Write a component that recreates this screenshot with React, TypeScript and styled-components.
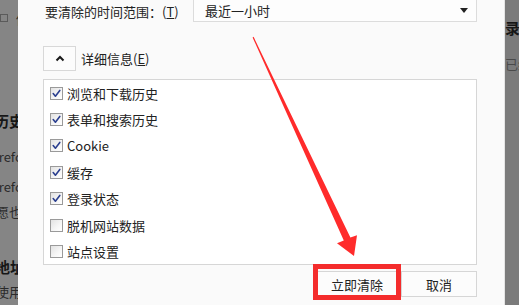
import { FC } from "react";
import styled, { createGlobalStyle } from "styled-components";

const GlobalStyle = createGlobalStyle`
    html, body {
        margin: 0;
        padding: 0;
        overflow: hidden;
        background: #7d7d7d;
    }
    body {
        font-family: "Noto Sans CJK SC", "Noto Sans", sans-serif;
        color: #222;
    }
`;

type Item = { label: string; checked: boolean };

const items: Item[] = [
    { label: "浏览和下载历史", checked: true },
    { label: "表单和搜索历史", checked: true },
    { label: "Cookie", checked: true },
    { label: "缓存", checked: true },
    { label: "登录状态", checked: true },
    { label: "脱机网站数据", checked: false },
    { label: "站点设置", checked: false }
];

const CheckBox: FC<{ checked: boolean }> = ({ checked }) => (
    <Box>
        {checked && (
            <svg width="11" height="11" viewBox="0 0 11 11">
                <path d="M2.2 5.6 L4.4 8.2 L8.8 2.4" fill="none" stroke="#2b3f8f" strokeWidth="1.6" strokeLinecap="round" strokeLinejoin="round" />
            </svg>
        )}
    </Box>
);

const App: FC = () => {
    return (
        <Page>
            <GlobalStyle />
            <LeftStrip>
                <StripLine $top={10} $shift={0}>
                    <TinyBox />
                    <span style={{ marginLeft: 8 }}>使</span>
                </StripLine>
                <StripLine $top={86} $shift={-6} $bold>历史记录</StripLine>
                <StripLine $top={20} $shift={-12}>Firefox 会</StripLine>
                <StripLine $top={14} $shift={-12}>Firefox 将</StripLine>
                <StripLine $top={9} $shift={-17}>意愿也</StripLine>
                <StripLine $top={39} $shift={-5} $bold>地址栏</StripLine>
                <StripLine $top={9} $shift={-4}>使用</StripLine>
            </LeftStrip>

            <Dialog>
                <TimeRow>
                    <TimeLabel>要清除的时间范围：(<u>T</u>)</TimeLabel>
                    <Select>
                        <span>最近一小时</span>
                        <svg width="8" height="5" viewBox="0 0 8 5">
                            <path d="M0 0 H8 L4 5 Z" fill="#222" />
                        </svg>
                    </Select>
                </TimeRow>

                <ExpandRow>
                    <ExpandButton>
                        <svg width="10" height="7" viewBox="0 0 10 7">
                            <path d="M1.5 5.5 L5 2 L8.5 5.5" fill="none" stroke="#1a1a1a" strokeWidth="2" />
                        </svg>
                    </ExpandButton>
                    <span>详细信息(<u>E</u>)</span>
                </ExpandRow>

                <ListBox>
                    {items.map((item) => (
                        <ListRow key={item.label}>
                            <CheckBox checked={item.checked} />
                            <span>{item.label}</span>
                        </ListRow>
                    ))}
                </ListBox>

                <ButtonRow>
                    <DialogButton $width={80}>立即清除</DialogButton>
                    <DialogButton $width={76}>取消</DialogButton>
                </ButtonRow>
            </Dialog>

            <RightStrip>
                <StripLine $top={19} $shift={0} $bold>
                    录<span style={{ color: "#2d5d9c" }}>制</span>
                </StripLine>
                <StripLine $top={20} $shift={0} $muted>已经</StripLine>
            </RightStrip>

            <Highlight />
            <ArrowLayer width="519" height="305" viewBox="0 0 519 305">
                <polygon
                    points="252.6,37.4 253.6,36.8 350.4,237.4 357,235.2 354,256 337,243.2 343.8,240.6"
                    fill="#ff2b2b"
                />
            </ArrowLayer>
        </Page>
    );
};

export default App;

const Page = styled.div`
    position: relative;
    display: flex;
    width: 519px;
    height: 305px;
    overflow: hidden;
    background: #7d7d7d;
`;

const LeftStrip = styled.div`
    width: 18px;
    flex-shrink: 0;
    display: flex;
    flex-direction: column;
    overflow: hidden;
    background: #858585;
`;

const RightStrip = styled.div`
    flex: 1;
    display: flex;
    flex-direction: column;
    overflow: hidden;
    background: #7b7b7b;
`;

const StripLine = styled.div<{ $top: number; $shift: number; $bold?: boolean; $muted?: boolean }>`
    display: flex;
    align-items: center;
    height: 16px;
    margin-top: ${(p) => p.$top}px;
    margin-left: ${(p) => p.$shift}px;
    white-space: nowrap;
    font-size: ${(p) => (p.$bold ? 15 : 13)}px;
    font-weight: ${(p) => (p.$bold ? 700 : 400)};
    color: ${(p) => (p.$muted ? "#4a4a4a" : p.$bold ? "#161616" : "#2a2a2a")};
`;

const TinyBox = styled.span`
    display: inline-block;
    width: 6px;
    height: 6px;
    border: 1px solid #5a5a5a;
    flex-shrink: 0;
`;

const Dialog = styled.div`
    width: 487px;
    flex-shrink: 0;
    box-sizing: border-box;
    display: flex;
    flex-direction: column;
    padding: 0 27px 0 25px;
    background: #fafafa;
    border-right: 1px solid #e4e4e4;
    font-size: 13px;
`;

const TimeRow = styled.div`
    display: flex;
    align-items: center;
    height: 26px;
    margin-top: -4px;
`;

const TimeLabel = styled.div`
    width: 150px;
    padding-left: 2px;
    box-sizing: border-box;
    margin-top: 4px;
    white-space: nowrap;
`;

const Select = styled.div`
    flex: 1;
    height: 26px;
    box-sizing: border-box;
    display: flex;
    align-items: center;
    justify-content: space-between;
    padding: 0 8px 0 11px;
    background: #fdfdfd;
    border: 1px solid #dcdcdc;
    svg {
        margin-top: 2px;
    }
    span {
        margin-top: 3px;
    }
`;

const ExpandRow = styled.div`
    display: flex;
    align-items: center;
    gap: 5px;
    height: 25px;
    margin-top: 24px;
`;

const ExpandButton = styled.div`
    width: 33px;
    height: 25px;
    box-sizing: border-box;
    display: flex;
    align-items: center;
    justify-content: center;
    background: #fcfcfc;
    border: 1px solid #d8d8d8;
`;

const ListBox = styled.div`
    height: 186px;
    margin-top: 8px;
    box-sizing: border-box;
    padding: 0 0 0 6px;
    background: #ffffff;
    border: 1px solid #d6d6d6;
`;

const ListRow = styled.div`
    display: flex;
    align-items: center;
    gap: 4px;
    height: 26.4px;
`;

const Box = styled.span`
    width: 13px;
    height: 13px;
    box-sizing: border-box;
    display: flex;
    align-items: center;
    justify-content: center;
    border: 1px solid #9a9a9a;
    background: linear-gradient(135deg, #e2e2e2 0%, #f6f6f6 60%, #ffffff 100%);
`;

const ButtonRow = styled.div`
    display: flex;
    justify-content: flex-end;
    gap: 4px;
    margin-top: 6px;
`;

const DialogButton = styled.div<{ $width: number }>`
    width: ${(p) => p.$width}px;
    height: 26px;
    box-sizing: border-box;
    display: flex;
    align-items: center;
    justify-content: center;
    background: #fcfcfc;
    border: 1px solid #d6d6d6;
`;

const Highlight = styled.div`
    position: absolute;
    left: 313px;
    top: 264px;
    width: 88px;
    height: 36px;
    box-sizing: border-box;
    border: 5px solid #f42c2c;
`;

const ArrowLayer = styled.svg`
    position: absolute;
    left: 0;
    top: 0;
    pointer-events: none;
`;
